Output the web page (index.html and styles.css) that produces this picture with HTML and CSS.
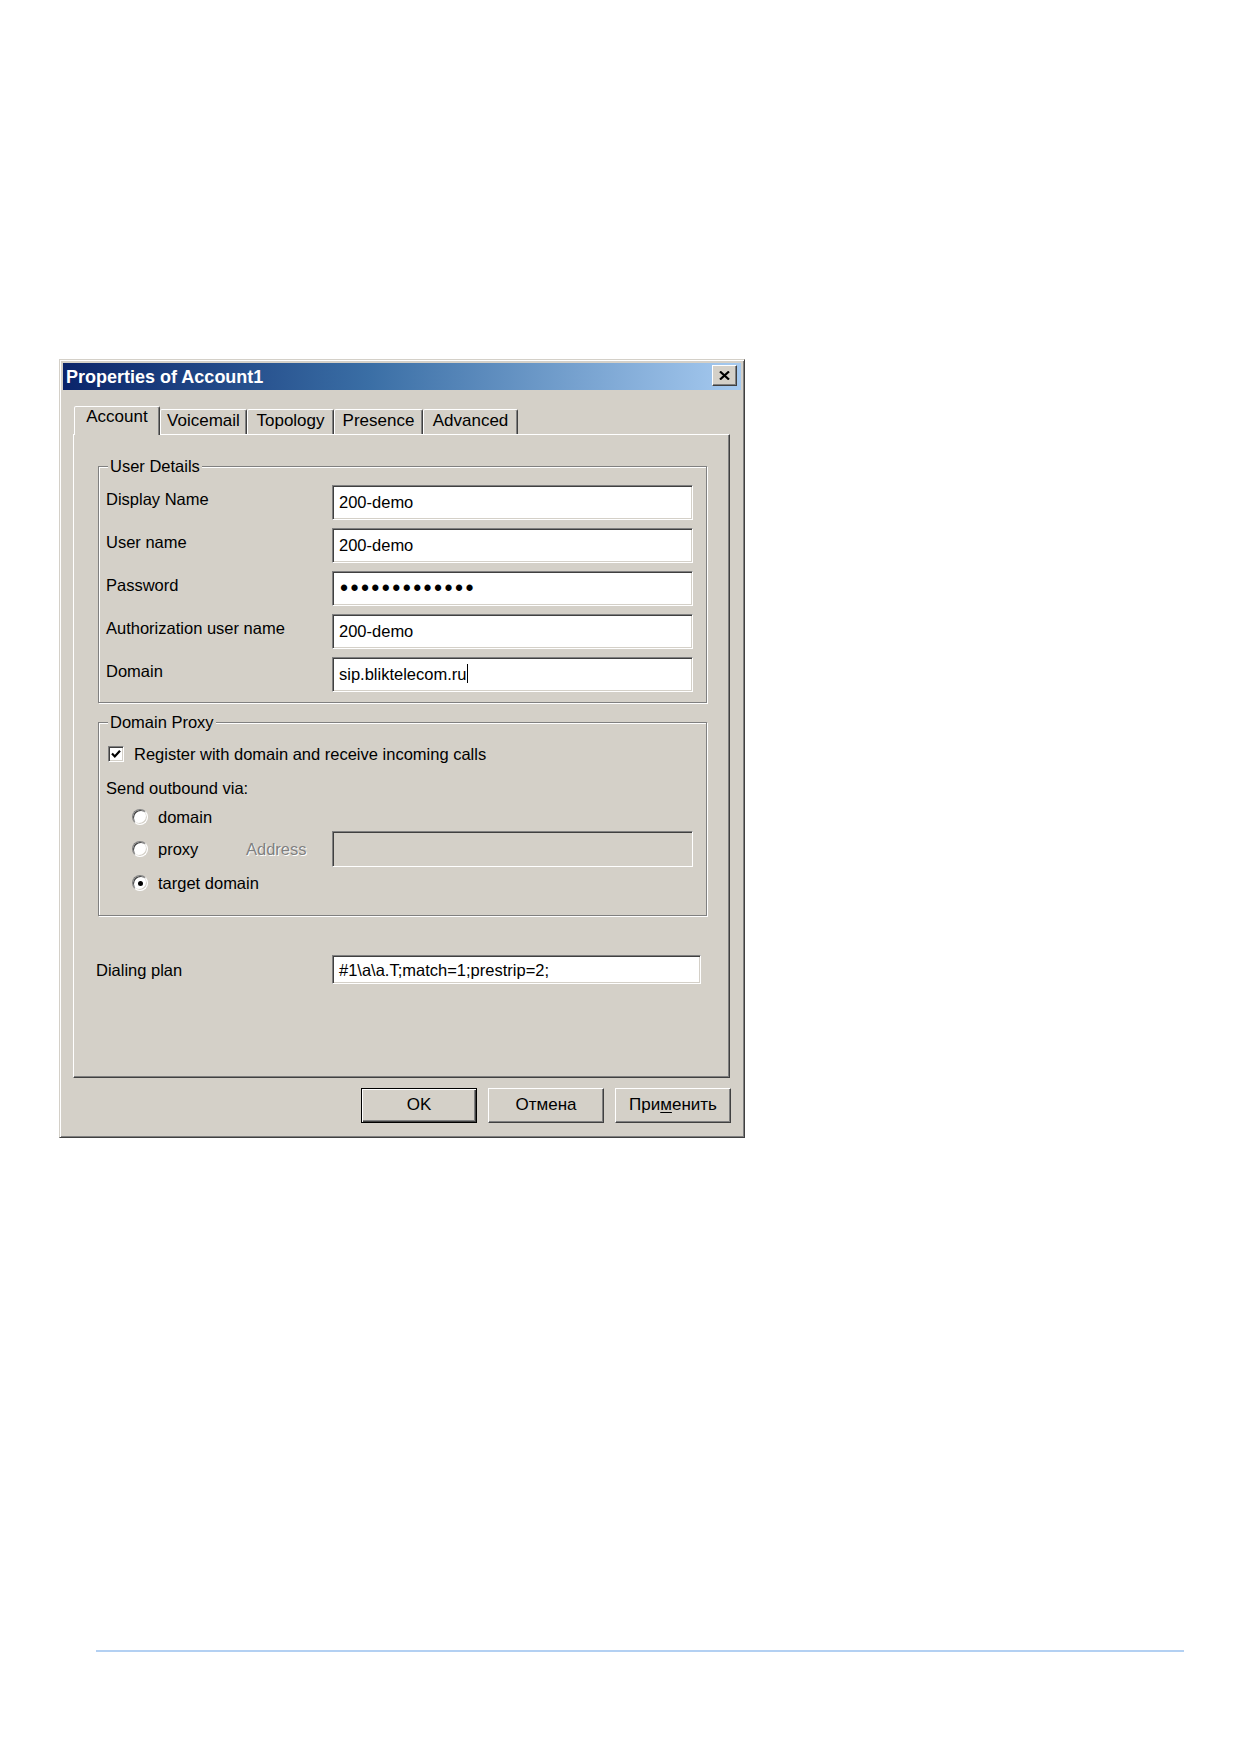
FILE: index.html
```html
<!DOCTYPE html>
<html lang="en">
<head>
<meta charset="utf-8">
<title>Properties of Account1</title>
<link rel="stylesheet" href="styles.css">
</head>
<body>
  <div class="dialog">
    <div class="titlebar">
      <span class="title">Properties of Account1</span>
      <button class="close" type="button" aria-label="Close">
        <svg width="11" height="9" viewBox="0 0 11 9" aria-hidden="true">
          <path d="M1 0.5 L10 8.5 M10 0.5 L1 8.5" stroke="#000" stroke-width="2.2" fill="none"/>
        </svg>
      </button>
    </div>

    <div class="tabs">
      <div class="tab tab-account active">Account</div>
      <div class="tab tab-voicemail">Voicemail</div>
      <div class="tab tab-topology">Topology</div>
      <div class="tab tab-presence">Presence</div>
      <div class="tab tab-advanced">Advanced</div>
    </div>

    <div class="panel">
      <div class="group group-user">
        <div class="legend">User Details</div>
        <div class="fields">
          <div class="label">Display Name</div>
          <div class="input">200-demo</div>
          <div class="label">User name</div>
          <div class="input">200-demo</div>
          <div class="label">Password</div>
          <div class="input"><span class="dots">&bull;&bull;&bull;&bull;&bull;&bull;&bull;&bull;&bull;&bull;&bull;&bull;&bull;</span></div>
          <div class="label">Authorization user name</div>
          <div class="input">200-demo</div>
          <div class="label">Domain</div>
          <div class="input">sip.bliktelecom.ru<span class="caret"></span></div>
        </div>
      </div>

      <div class="group group-proxy">
        <div class="legend">Domain Proxy</div>
        <div class="check-line">
          <span class="checkbox">
            <svg width="12" height="12" viewBox="0 0 12 12" aria-hidden="true">
              <path d="M2 5.5 L4.8 8.5 L10 2.8" stroke="#000" stroke-width="2.2" fill="none"/>
            </svg>
          </span>
          <span>Register with domain and receive incoming calls</span>
        </div>
        <div class="send-label">Send outbound via:</div>
        <div class="radio-line radio-domain">
          <span class="radio"></span><span>domain</span>
        </div>
        <div class="proxy-row">
          <div class="radio-line">
            <span class="radio"></span><span class="proxy-text">proxy</span><span class="disabled-text">Address</span>
          </div>
          <div class="input input-disabled"></div>
        </div>
        <div class="radio-line radio-target">
          <span class="radio on"></span><span>target domain</span>
        </div>
      </div>

      <div class="dial-row">
        <div class="label">Dialing plan</div>
        <div class="input input-dial">#1\a\a.T;match=1;prestrip=2;</div>
      </div>
    </div>

    <div class="buttons">
      <button class="btn btn-default" type="button">OK</button>
      <button class="btn" type="button">Отмена</button>
      <button class="btn" type="button">При<u>м</u>енить</button>
    </div>
  </div>

  <div class="rule"></div>
</body>
</html>
```

FILE: styles.css
```css
* {
  box-sizing: border-box;
}

html,
body {
  margin: 0;
  padding: 0;
  background: #fff;
}

body {
  font-family: "Liberation Sans", Arial, sans-serif;
  font-size: 16.5px;
  line-height: 20px;
  color: #000;
}

/* ---- window frame ---- */
.dialog {
  width: 686px;
  margin: 359px 0 0 59px;
  padding: 3px 3px 14px 3px;
  background: #d4d0c8;
  border: 1px solid;
  border-color: #d4d0c8 #404040 #404040 #d4d0c8;
  box-shadow: inset 1px 1px 0 #fff, inset -1px -1px 0 #808080;
}

.titlebar {
  height: 27px;
  display: flex;
  align-items: center;
  justify-content: space-between;
  padding: 0 4px 0 3px;
  background: linear-gradient(to right, #0a246a 0%, #3a6ea5 45%, #a6caf0 100%);
}

.title {
  color: #fff;
  font-weight: bold;
  font-size: 18px;
  line-height: 20px;
}

.close {
  width: 25px;
  height: 21px;
  margin-top: -2px;
  padding: 0;
  display: flex;
  align-items: center;
  justify-content: center;
  background: #d4d0c8;
  border: 1px solid;
  border-color: #fff #404040 #404040 #fff;
  box-shadow: inset -1px -1px 0 #808080;
}

/* ---- tab strip ---- */
.tabs {
  display: flex;
  align-items: flex-end;
  margin: 16px 0 0 11px;
  height: 28px;
}

.tab {
  height: 25px;
  padding-top: 1px;
  font-size: 17px;
  line-height: 20px;
  text-align: center;
  white-space: nowrap;
  border: 1px solid;
  border-bottom: none;
  border-color: #fff #404040 transparent #fff;
  border-radius: 2px 2px 0 0;
  box-shadow: inset -1px 0 0 #808080;
  background: #d4d0c8;
}

.tab.active {
  height: 29px;
  padding-top: 0;
  margin-bottom: -1px;
  position: relative;
  z-index: 1;
}

.tab-account { width: 86px; }
.tab-voicemail { width: 87px; }
.tab-topology { width: 87px; }
.tab-presence { width: 89px; }
.tab-advanced { width: 95px; }

/* ---- page panel ---- */
.panel {
  width: 657px;
  height: 644px;
  margin-left: 10px;
  padding: 31px 0 0 22px;
  border: 1px solid;
  border-color: #fff #404040 #404040 #fff;
  box-shadow: inset -1px -1px 0 #808080;
}

.group {
  width: 609px;
  margin-left: 2px;
  padding: 0 13px 10px 7px;
  border: 1px solid #808080;
  box-shadow: inset 1px 1px 0 #fff, 1px 1px 0 #fff;
}

.group-proxy {
  margin-top: 19px;
  padding-bottom: 22px;
}

.legend {
  width: fit-content;
  margin: -11px 0 0 2px;
  padding: 0 2px;
  background: #d4d0c8;
}

.fields {
  display: grid;
  grid-template-columns: 226px 361px;
  grid-auto-rows: 35px;
  row-gap: 8px;
  margin-top: 9px;
}

.label {
  display: flex;
  align-items: center;
  padding-bottom: 8px;
  white-space: nowrap;
}

.input {
  display: flex;
  align-items: center;
  padding: 0 0 2px 6px;
  background: #fff;
  border: 1px solid;
  border-color: #808080 #fff #fff #808080;
  box-shadow: inset 1px 1px 0 #404040, inset -1px -1px 0 #d4d0c8;
  white-space: nowrap;
}

.input-disabled {
  background: #d4d0c8;
}

.dots {
  font-size: 23px;
  letter-spacing: 2.4px;
  line-height: 20px;
  padding: 1px 0 0 1px;
}

.caret {
  display: inline-block;
  width: 1px;
  height: 19px;
  margin-left: 1px;
  background: #000;
}

/* ---- check box and radio buttons ---- */
.check-line {
  display: flex;
  align-items: center;
  gap: 10px;
  height: 20px;
  margin: 12px 0 0 2px;
}

.checkbox {
  width: 16px;
  height: 16px;
  display: flex;
  align-items: center;
  justify-content: center;
  background: #fff;
  border: 1px solid;
  border-color: #808080 #fff #fff #808080;
  box-shadow: inset 1px 1px 0 #404040, inset -1px -1px 0 #d4d0c8;
}

.send-label {
  margin-top: 14px;
}

.radio-line {
  display: flex;
  align-items: center;
  gap: 10px;
  height: 20px;
  padding-left: 26px;
}

.radio-domain {
  margin-top: 9px;
}

.radio-target {
  margin-top: 6px;
}

.radio {
  width: 16px;
  height: 16px;
  flex: none;
  display: flex;
  align-items: center;
  justify-content: center;
  border-radius: 50%;
  background: #fff;
  border: 1px solid;
  border-color: #808080 #fff #fff #808080;
  box-shadow: inset 1px 1px 0 #404040, inset -1px -1px 0 #d4d0c8;
}

.radio.on::after {
  content: "";
  width: 5px;
  height: 5px;
  border-radius: 50%;
  background: #000;
}

.proxy-row {
  display: grid;
  grid-template-columns: 226px 361px;
  height: 36px;
  margin-top: 4px;
  align-items: center;
}

.proxy-row .input {
  height: 36px;
}

.proxy-text {
  width: 78px;
}

.disabled-text {
  color: #808080;
  text-shadow: 1px 1px 0 #fff;
}

/* ---- dialing plan ---- */
.dial-row {
  display: grid;
  grid-template-columns: 236px 369px;
  height: 29px;
  margin-top: 39px;
}

.dial-row .label {
  padding-bottom: 0;
}

.input-dial {
  padding-bottom: 0;
}

/* ---- command buttons ---- */
.buttons {
  display: flex;
  justify-content: flex-end;
  gap: 11px;
  margin-top: 10px;
  padding-right: 10px;
}

.btn {
  width: 116px;
  height: 35px;
  padding: 0 0 2px;
  font-family: inherit;
  font-size: 17px;
  color: #000;
  background: #d4d0c8;
  border: 1px solid;
  border-color: #fff #404040 #404040 #fff;
  box-shadow: inset -1px -1px 0 #808080;
}

.btn-default {
  border-color: #000;
  box-shadow: inset 1px 1px 0 #fff, inset -1px -1px 0 #404040, inset -2px -2px 0 #808080;
}

.btn u {
  text-decoration-thickness: 1px;
  text-underline-offset: 2px;
}

/* ---- footer rule ---- */
.rule {
  width: 1088px;
  height: 2px;
  margin: 512px 0 0 96px;
  background: #b3d0f2;
  box-shadow: 0 1px 0 #dbe8f8;
}
```
